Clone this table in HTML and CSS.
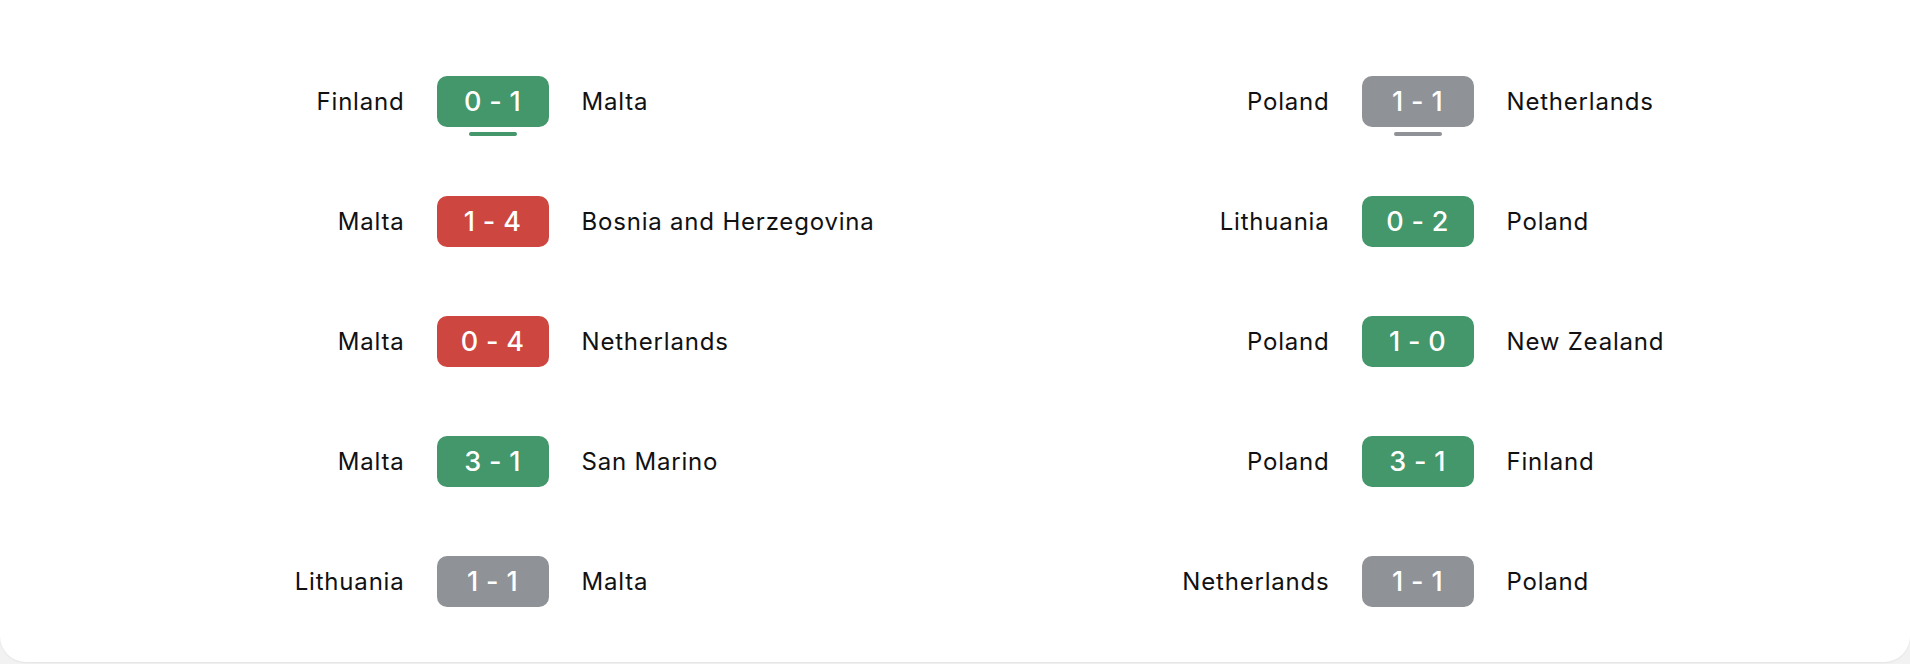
FILE: index.html
```html
<!DOCTYPE html>
<html>
<head>
<meta charset="utf-8">
<link rel="stylesheet" href="styles.css">
</head>
<body>
<div class="card">
  <div class="col">
    <div class="row"><span class="home">Finland</span><span class="score win current">0 - 1</span><span class="away">Malta</span></div>
    <div class="row"><span class="home">Malta</span><span class="score loss">1 - 4</span><span class="away">Bosnia and Herzegovina</span></div>
    <div class="row"><span class="home">Malta</span><span class="score loss">0 - 4</span><span class="away">Netherlands</span></div>
    <div class="row"><span class="home">Malta</span><span class="score win">3 - 1</span><span class="away">San Marino</span></div>
    <div class="row"><span class="home">Lithuania</span><span class="score draw">1 - 1</span><span class="away">Malta</span></div>
  </div>
  <div class="col">
    <div class="row"><span class="home">Poland</span><span class="score draw current">1 - 1</span><span class="away">Netherlands</span></div>
    <div class="row"><span class="home">Lithuania</span><span class="score win">0 - 2</span><span class="away">Poland</span></div>
    <div class="row"><span class="home">Poland</span><span class="score win">1 - 0</span><span class="away">New Zealand</span></div>
    <div class="row"><span class="home">Poland</span><span class="score win">3 - 1</span><span class="away">Finland</span></div>
    <div class="row"><span class="home">Netherlands</span><span class="score draw">1 - 1</span><span class="away">Poland</span></div>
  </div>
</div>
</body>
</html>
```
FILE: styles.css
```css
html, body {
  margin: 0;
  padding: 0;
  background: #f2f2f2;
}
body {
  height: 664px;
  overflow: hidden;
  font-family: "Inter", "Liberation Sans", sans-serif;
  color: #111;
}
.card {
  background: #fff;
  height: 662px;
  box-sizing: border-box;
  padding: 76px 30px 0;
  border-radius: 0 0 26px 26px;
  box-shadow: 0 1px 2px rgba(0,0,0,0.06);
  display: grid;
  grid-template-columns: 1fr 1fr;
  align-items: start;
}
.col {
  display: flex;
  flex-direction: column;
  gap: 69px;
}
.row {
  display: grid;
  grid-template-columns: 1fr 112px 1fr;
  column-gap: 33px;
  align-items: center;
  height: 51px;
}
.home,
.away {
  font-size: 24px;
  letter-spacing: 0.8px;
  white-space: nowrap;
}
.home { text-align: right; margin-right: -1px; }
.away { text-align: left; }
.score {
  position: relative;
  height: 51px;
  border-radius: 10px;
  color: #fff;
  font-size: 27px;
  font-weight: 500;
  display: flex;
  align-items: center;
  justify-content: center;
  letter-spacing: 0.3px;
}
.win { background: #43976a; }
.loss { background: #cd4640; }
.draw { background: #8f9397; }
.current::after {
  content: "";
  position: absolute;
  left: 32px;
  width: 48px;
  top: 56px;
  height: 4px;
  border-radius: 2px;
  background: inherit;
}
```
